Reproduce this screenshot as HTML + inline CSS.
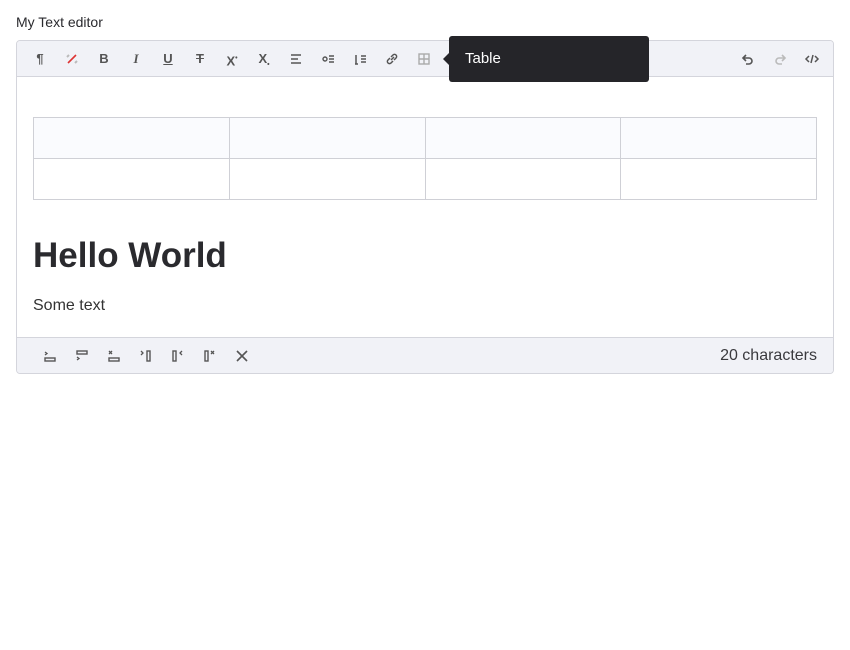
<!DOCTYPE html>
<html><head><meta charset="utf-8"><style>
*{box-sizing:border-box}
body{margin:0;background:#fff;font-family:"Liberation Sans",sans-serif;color:#2a2a2e;width:850px;height:650px;position:relative;overflow:hidden}
.label{position:absolute;left:16px;top:14px;font-size:14px;color:#2a2a2e}
.ed{position:absolute;left:16px;top:40px;width:818px;height:334px;border:1px solid #d4d5dc;border-radius:4px;overflow:hidden}
.tb{position:absolute;left:0;top:0;width:100%;height:36px;background:#f1f2f7;border-bottom:1px solid #d4d5dc}
.ft{position:absolute;left:0;bottom:0;width:100%;height:36px;background:#f1f2f7;border-top:1px solid #d4d5dc}
.ic{position:absolute;top:10px;width:16px;height:16px;font-size:13px;font-weight:bold;color:#555;text-align:center;line-height:16px}
svg{display:block}
table{position:absolute;left:16px;top:76px;width:784px;border-collapse:collapse}
td{border:1px solid #cfd0d6;height:41px}
tr:first-child td{background:#fafbfe}
h1{position:absolute;left:16px;top:195px;margin:0;font-size:35px;font-weight:bold;color:#2a2a2e}
p{position:absolute;left:16px;top:256px;margin:0;font-size:16px;color:#333}
.cnt{position:absolute;right:16px;top:9px;font-size:16px;color:#3a3a3e}
.tip{position:absolute;left:449px;top:36px;width:200px;height:46px;background:#252529;border-radius:3px;color:#fff;font-size:15px;line-height:46px;padding-left:16px}
.tip:before{content:"";position:absolute;left:-6px;top:17px;border:6px solid transparent;border-left:0;border-right-color:#252529}
</style></head><body>
<div class="label">My Text editor</div>
<div class="ed">
<div class="tb">
<div class="ic" style="left:15px">¶</div>
<div class="ic" style="left:47px"><svg width="16" height="16"><path d="M4 12L12 4" stroke="#d33" stroke-width="1.6"/><path d="M3 6l2-2M11 12l2-2" stroke="#bbb" stroke-width="2"/></svg></div>
<div class="ic" style="left:79px">B</div>
<div class="ic" style="left:111px;font-style:italic;font-family:'Liberation Serif',serif">I</div>
<div class="ic" style="left:143px;text-decoration:underline">U</div>
<div class="ic" style="left:175px;text-decoration:line-through">T</div>
<div class="ic" style="left:207px">X<sup style="font-size:7px">•</sup></div>
<div class="ic" style="left:239px">X<sub style="font-size:7px">•</sub></div>
<div class="ic" style="left:271px"><svg width="16" height="16"><path d="M3 4h10M3 8h7M3 12h10" stroke="#555" stroke-width="1.6"/></svg></div>
<div class="ic" style="left:303px"><svg width="16" height="16"><circle cx="5" cy="8" r="2" fill="none" stroke="#555" stroke-width="1.4"/><path d="M9 5h5M9 8h5M9 11h5" stroke="#555" stroke-width="1.4"/></svg></div>
<div class="ic" style="left:335px"><svg width="16" height="16"><path d="M4 4v9M3 13h3M9 5h5M9 8h5M9 11h5" stroke="#555" stroke-width="1.5"/></svg></div>
<div class="ic" style="left:367px"><svg width="16" height="16"><path d="M7 9l3-3M6 7l-2 2a2 2 0 003 3l2-2M10 9l2-2a2 2 0 00-3-3l-2 2" fill="none" stroke="#555" stroke-width="1.5"/></svg></div>
<div class="ic" style="left:399px"><svg width="16" height="16"><rect x="3" y="3" width="10" height="10" fill="none" stroke="#aaa" stroke-width="1.4"/><path d="M8 3v10M3 8h10" stroke="#aaa" stroke-width="1.4"/></svg></div>
<div class="ic" style="left:723px"><svg width="16" height="16"><path d="M6 4L3 7l3 3M3 7h6a3 3 0 010 6H6" fill="none" stroke="#555" stroke-width="1.6"/></svg></div>
<div class="ic" style="left:755px"><svg width="16" height="16"><path d="M10 4l3 3-3 3M13 7H7a3 3 0 000 6h3" fill="none" stroke="#bbb" stroke-width="1.6"/></svg></div>
<div class="ic" style="left:787px"><svg width="16" height="16"><path d="M5 5L2 8l3 3M11 5l3 3-3 3M9 4L7 12" fill="none" stroke="#555" stroke-width="1.5"/></svg></div>
</div>
<table><tr><td></td><td></td><td></td><td></td></tr><tr><td></td><td></td><td></td><td></td></tr></table>
<h1>Hello World</h1>
<p>Some text</p>
<div class="ft">
<div class="ic" style="left:25px"><svg width="16" height="16"><path d="M3 4l2 1.5L3 7" fill="none" stroke="#555" stroke-width="1.3"/><rect x="3" y="10" width="10" height="3" fill="none" stroke="#555" stroke-width="1.4"/></svg></div>
<div class="ic" style="left:57px"><svg width="16" height="16"><rect x="3" y="3" width="10" height="3" fill="none" stroke="#555" stroke-width="1.4"/><path d="M3 9l2 1.5L3 12" fill="none" stroke="#555" stroke-width="1.3"/></svg></div>
<div class="ic" style="left:89px"><svg width="16" height="16"><path d="M3 3l3 3M6 3L3 6" stroke="#555" stroke-width="1.3"/><rect x="3" y="10" width="10" height="3" fill="none" stroke="#555" stroke-width="1.4"/></svg></div>
<div class="ic" style="left:121px"><svg width="16" height="16"><path d="M3 3l2 2-2 2" fill="none" stroke="#555" stroke-width="1.3"/><rect x="9" y="3" width="3" height="10" fill="none" stroke="#555" stroke-width="1.4"/></svg></div>
<div class="ic" style="left:153px"><svg width="16" height="16"><rect x="3" y="3" width="3" height="10" fill="none" stroke="#555" stroke-width="1.4"/><path d="M12 3l-2 2 2 2" fill="none" stroke="#555" stroke-width="1.3"/></svg></div>
<div class="ic" style="left:185px"><svg width="16" height="16"><rect x="3" y="3" width="3" height="10" fill="none" stroke="#555" stroke-width="1.4"/><path d="M9 3l3 3M12 3L9 6" stroke="#555" stroke-width="1.3"/></svg></div>
<div class="ic" style="left:217px"><svg width="16" height="16"><path d="M3 3l10 10M13 3L3 13" stroke="#555" stroke-width="1.6"/></svg></div>
<div class="cnt">20 characters</div>
</div>
</div>
<div class="tip">Table</div>
</body></html>
